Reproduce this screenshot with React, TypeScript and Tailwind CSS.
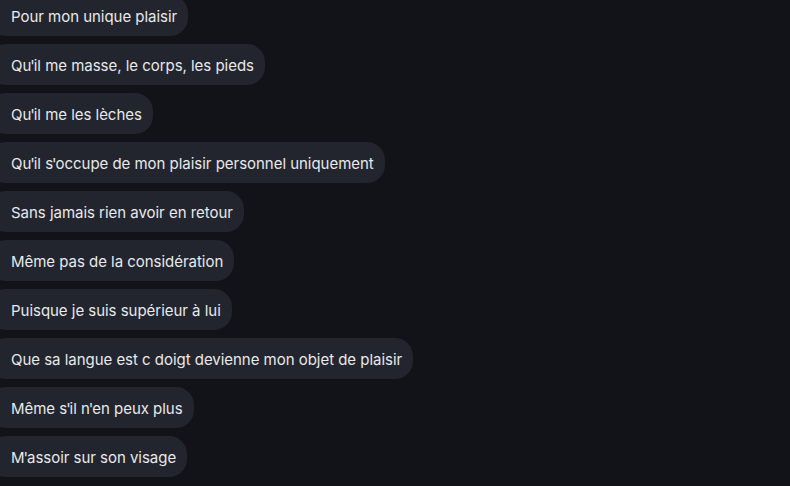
const messages = [
  "Pour mon unique plaisir",
  "Qu'il me masse, le corps, les pieds",
  "Qu'il me les lèches",
  "Qu'il s'occupe de mon plaisir personnel uniquement",
  "Sans jamais rien avoir en retour",
  "Même pas de la considération",
  "Puisque je suis supérieur à lui",
  "Que sa langue est c doigt devienne mon objet de plaisir",
  "Même s'il n'en peux plus",
  "M'assoir sur son visage",
]

// apostrophes run a touch narrower in the original font
const renderText = (text: string) =>
  text.split("'").map((part, i) => (
    <span key={i}>
      {i > 0 && <span className="-mx-[1px]">'</span>}
      {part}
    </span>
  ))

export default function App() {
  return (
    <div className="w-[790px] h-[486px] overflow-hidden bg-[#111318] font-['Inter',sans-serif]">
      <div className="flex flex-col items-start gap-2 -mt-[5px] -ml-[12px]">
        {messages.map((m, i) => (
          <div
            key={i}
            className="h-[41px] flex items-center pt-1 pl-[23px] pr-[11px] rounded-[18px] bg-[#22252d] text-[15px] tracking-[-0.03px] text-[#e8e9ec] whitespace-nowrap"
          >
            {renderText(m)}
          </div>
        ))}
      </div>
    </div>
  )
}
